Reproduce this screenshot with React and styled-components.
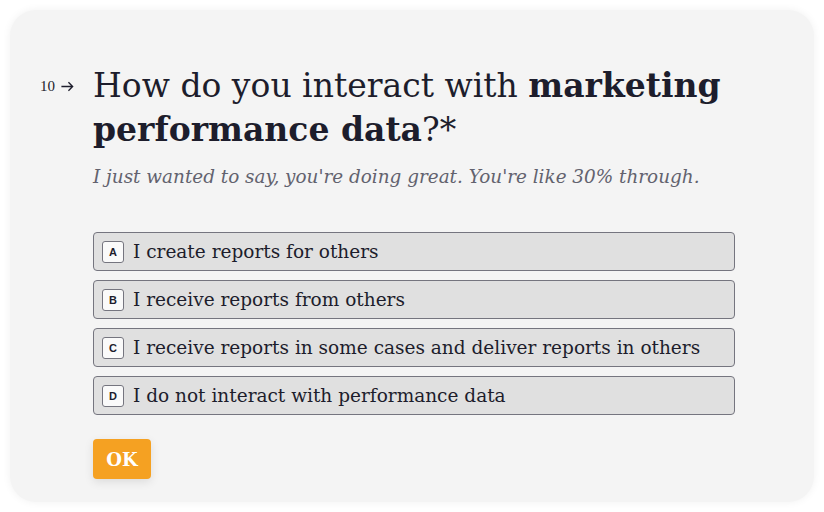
import React from "react";
import styled, { createGlobalStyle } from "styled-components";

const Global = createGlobalStyle`
  html, body { margin: 0; padding: 0; background: #ffffff; }
  body { font-family: "DejaVu Serif", serif; }
`;

const Card = styled.div`
  margin: 10px;
  width: 804px;
  height: 492px;
  box-sizing: border-box;
  background: #f4f4f4;
  border-radius: 26px;
  box-shadow: 0 0 8px rgba(0, 0, 0, 0.06);
  padding: 54px 0 0 30px;
  display: flex;
  align-items: flex-start;
`;

const Number = styled.div`
  width: 53px;
  flex: none;
  display: flex;
  align-items: center;
  gap: 5px;
  margin-top: 14px;
  font-family: "Liberation Serif", serif;
  font-size: 15px;
  color: #1d1d2c;
`;

const Arrow = styled.svg`
  width: 15px;
  height: 15px;
`;

const Body = styled.div`
  width: 642px;
  display: flex;
  flex-direction: column;
`;

const Title = styled.h1`
  margin: 0;
  font-size: 33px;
  line-height: 44px;
  font-weight: 400;
  color: #1d1d2c;
`;

const Strong = styled.b`
  font-weight: 700;
`;

const Subtitle = styled.p`
  margin: 11px 0 0;
  font-size: 18.4px;
  line-height: 28px;
  font-style: italic;
  color: #62626e;
`;

const Options = styled.div`
  margin-top: 41px;
  display: flex;
  flex-direction: column;
  gap: 9px;
`;

const Option = styled.div`
  height: 39px;
  box-sizing: border-box;
  border: 1px solid #75757f;
  border-radius: 4px;
  background: #e0e0e0;
  display: flex;
  align-items: center;
  padding-left: 8px;
  gap: 9px;
  font-size: 18.5px;
  color: #1d1d2c;
`;

const Key = styled.span`
  width: 22px;
  height: 22px;
  box-sizing: border-box;
  border: 1px solid #75757f;
  border-radius: 3px;
  background: #fafafa;
  display: flex;
  align-items: center;
  justify-content: center;
  font-family: "Liberation Sans", Arial, sans-serif;
  font-weight: 700;
  font-size: 11px;
  color: #1d1d2c;
`;

const OkButton = styled.button`
  margin-top: 24px;
  align-self: flex-start;
  width: 58px;
  height: 40px;
  border: none;
  border-radius: 4px;
  background: #f5a122;
  color: #ffffff;
  font-family: "DejaVu Serif", serif;
  font-weight: 700;
  font-size: 18px;
  box-shadow: 0 3px 10px rgba(0, 0, 0, 0.1);
  padding: 0;
`;

const options = [
  ["A", "I create reports for others"],
  ["B", "I receive reports from others"],
  ["C", "I receive reports in some cases and deliver reports in others"],
  ["D", "I do not interact with performance data"],
];

export default function App() {
  return (
    <>
      <Global />
      <Card>
        <Number>
          10
          <Arrow viewBox="0 0 16 16" fill="none" stroke="#1d1d2c" strokeWidth="1.4">
            <path d="M1.5 8h12M9 3.5l4.5 4.5L9 12.5" />
          </Arrow>
        </Number>
        <Body>
          <Title>
            How do you interact with <Strong>marketing</Strong>{" "}
            <Strong>performance data</Strong>?*
          </Title>
          <Subtitle>I just wanted to say, you're doing great. You're like 30% through.</Subtitle>
          <Options>
            {options.map(([k, t]) => (
              <Option key={k}>
                <Key>{k}</Key>
                {t}
              </Option>
            ))}
          </Options>
          <OkButton>OK</OkButton>
        </Body>
      </Card>
    </>
  );
}
